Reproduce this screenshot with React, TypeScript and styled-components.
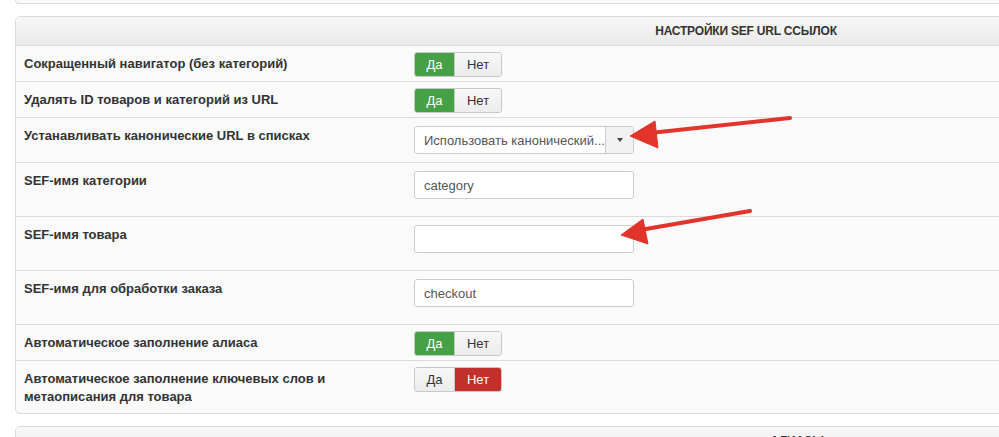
import React from "react";
import styled, { createGlobalStyle } from "styled-components";

const Global = createGlobalStyle`
  html, body { margin: 0; padding: 0; background: #ffffff; overflow: hidden; }
  body { font-family: "Liberation Sans", Arial, sans-serif; font-size: 13px; color: #333; }
`;

const Page = styled.div`
  position: relative;
  width: 999px;
  height: 437px;
  overflow: hidden;
  padding-left: 15px;
  box-sizing: border-box;
`;

const TopStub = styled.div`
  width: 1460px;
  height: 3px;
  border: 1px solid #dcdcdc;
  border-top: none;
  border-radius: 0 0 5px 5px;
  background: #fafafa;
`;

const Panel = styled.div<{ $mt: number }>`
  width: 1460px;
  margin-top: ${(p) => p.$mt}px;
  border: 1px solid #dcdcdc;
  border-radius: 5px;
  background: #fafafa;
  overflow: hidden;
`;

const Header = styled.div<{ $shift?: number }>`
  height: 28px;
  display: flex;
  align-items: center;
  justify-content: center;
  padding-left: ${(p) => p.$shift ?? 0}px;
  background: linear-gradient(#f7f7f7, #e9e9e9);
  border-bottom: 1px solid #dcdcdc;
  font-weight: bold;
  font-size: 12px;
  color: #333;
  letter-spacing: -0.2px;
`;

const Row = styled.div<{ $pt: number; $pb: number; $last?: boolean }>`
  display: grid;
  grid-template-columns: 390px 1fr;
  align-items: start;
  padding: ${(p) => p.$pt}px 8px ${(p) => p.$pb}px 8px;
  border-bottom: ${(p) => (p.$last ? "none" : "1px solid #dcdcdc")};
`;

const Label = styled.div<{ $mt: number }>`
  margin-top: ${(p) => p.$mt}px;
  font-weight: bold;
  font-size: 13px;
  line-height: 18px;
  color: #333;
  width: 340px;
`;

const Toggle = styled.div`
  display: inline-flex;
  height: 25px;
  border-radius: 3px;
  overflow: hidden;
  border: 1px solid #c8c8c8;
  box-sizing: border-box;
  width: 88px;
`;

const ToggleBtn = styled.div<{ $on?: "green" | "red"; $w: number }>`
  width: ${(p) => p.$w}px;
  display: flex;
  align-items: center;
  justify-content: center;
  font-size: 13px;
  color: ${(p) => (p.$on ? "#ffffff" : "#333")};
  background: ${(p) =>
    p.$on === "green" ? "#46a046" : p.$on === "red" ? "#c2302b" : "linear-gradient(#f7f7f7, #ececec)"};
  & + & { border-left: 1px solid #c8c8c8; }
`;

const Select = styled.div`
  display: inline-flex;
  width: 220px;
  height: 28px;
  border: 1px solid #cccccc;
  border-radius: 3px;
  box-sizing: border-box;
  background: #fff;
  overflow: hidden;
`;

const SelectText = styled.div`
  flex: 1;
  display: flex;
  align-items: center;
  padding-left: 9px;
  color: #555;
  font-size: 13px;
  white-space: nowrap;
`;

const SelectArrow = styled.div`
  width: 27px;
  border-left: 1px solid #cccccc;
  background: #f2f2f2;
  display: flex;
  align-items: center;
  justify-content: center;
  &::after {
    content: "";
    border-left: 3.5px solid transparent;
    border-right: 3.5px solid transparent;
    border-top: 4px solid #444;
  }
`;

const Input = styled.div`
  width: 220px;
  height: 28px;
  border: 1px solid #cccccc;
  border-radius: 3px;
  box-sizing: border-box;
  background: #fff;
  display: flex;
  align-items: center;
  padding-left: 9px;
  color: #555;
  font-size: 13px;
`;

const Overlay = styled.svg`
  position: absolute;
  left: 0;
  top: 0;
  pointer-events: none;
`;

const YesNo = ({ yes }: { yes: boolean }) => (
  <Toggle>
    <ToggleBtn $w={40} $on={yes ? "green" : undefined}>Да</ToggleBtn>
    <ToggleBtn $w={47} $on={yes ? undefined : "red"}>Нет</ToggleBtn>
  </Toggle>
);

export default function App() {
  return (
    <>
      <Global />
      <Page>
        <TopStub />
        <Panel $mt={12}>
          <Header>НАСТРОЙКИ SEF URL ССЫЛОК</Header>
          <Row $pt={6} $pb={4}>
            <Label $mt={3}>Сокращенный навигатор (без категорий)</Label>
            <YesNo yes />
          </Row>
          <Row $pt={6} $pb={4}>
            <Label $mt={3}>Удалять ID товаров и категорий из URL</Label>
            <YesNo yes />
          </Row>
          <Row $pt={8} $pb={8}>
            <Label $mt={1}>Устанавливать канонические URL в списках</Label>
            <Select>
              <SelectText>Использовать канонический...</SelectText>
              <SelectArrow />
            </Select>
          </Row>
          <Row $pt={8} $pb={17}>
            <Label $mt={1}>SEF-имя категории</Label>
            <Input>category</Input>
          </Row>
          <Row $pt={8} $pb={17}>
            <Label $mt={1}>SEF-имя товара</Label>
            <Input />
          </Row>
          <Row $pt={8} $pb={17}>
            <Label $mt={1}>SEF-имя для обработки заказа</Label>
            <Input>checkout</Input>
          </Row>
          <Row $pt={6} $pb={4}>
            <Label $mt={3}>Автоматическое заполнение алиаса</Label>
            <YesNo yes />
          </Row>
          <Row $pt={6} $pb={7} $last>
            <Label $mt={3}>Автоматическое заполнение ключевых слов и метаописания для товара</Label>
            <YesNo yes={false} />
          </Row>
        </Panel>
        <Panel $mt={12}>
          <Header $shift={102}>АЛИАСЫ</Header>
        </Panel>
        <Overlay width="999" height="437" viewBox="0 0 999 437">
          <g fill="#e3342c" stroke="#e3342c" strokeLinejoin="round">
            <line x1="790" y1="118" x2="650" y2="133" strokeWidth="4" strokeLinecap="round" />
            <polygon points="630,136 655,121 658,148" strokeWidth="1" />
            <line x1="750" y1="211" x2="640" y2="230" strokeWidth="4" strokeLinecap="round" />
            <polygon points="621,235 643,219 648,244" strokeWidth="1" />
          </g>
        </Overlay>
      </Page>
    </>
  );
}
